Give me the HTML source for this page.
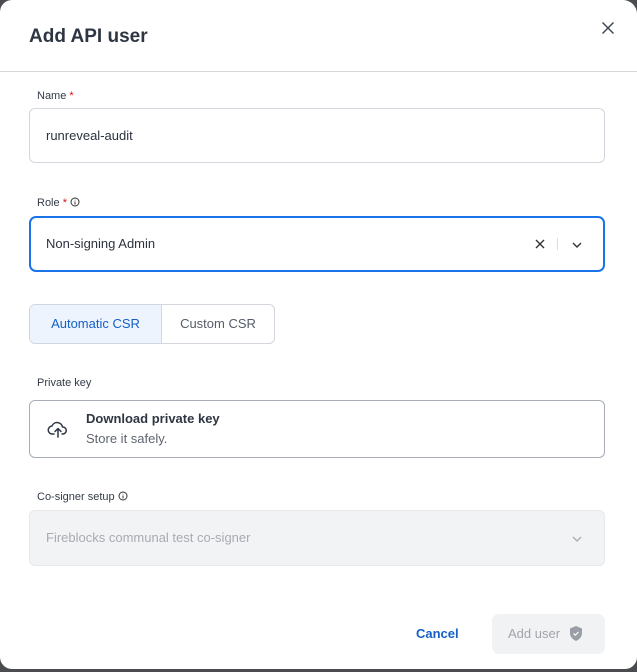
<!DOCTYPE html><html><head><style>
body{margin:0;width:637px;height:672px;background:#4a4c50;font-family:"Liberation Sans",sans-serif;position:relative;overflow:hidden}
.m{position:absolute;left:0;top:0;width:637px;height:669px;background:#fff;border-radius:12px 14px 12px 12px}
.a{position:absolute}
.lbl{font-size:11px;color:#333b48}
.st{color:#d11}
.box{position:absolute;left:29px;width:576px;border:1px solid #d3d6dc;border-radius:6px;box-sizing:border-box}
</style></head><body><div class="m">
<div class="a" style="left:29px;top:26px;font-size:19px;font-weight:bold;color:#2f3643">Add API user</div>
<svg class="a" style="left:601px;top:21px" width="14" height="14"><path d="M1.5 1.5L12.5 12.5M12.5 1.5L1.5 12.5" stroke="#3a404c" stroke-width="1.4"/></svg>
<div class="a" style="left:0;top:71px;width:637px;height:1px;background:#d6d8dc"></div>
<div class="a lbl" style="left:37px;top:90px">Name <span class="st">*</span></div>
<div class="box" style="top:108px;height:55px"><div class="a" style="left:16px;top:19px;font-size:13px;color:#2c3340">runreveal-audit</div></div>
<div class="a lbl" style="left:37px;top:197px">Role <span class="st">*</span> <svg width="10" height="10" style="vertical-align:-1px"><circle cx="5" cy="5" r="4" fill="none" stroke="#333" stroke-width="1"/><path d="M5 4.5V7.5M5 2.8V3.4" stroke="#333"/></svg></div>
<div class="box" style="top:216px;height:56px;border:2px solid #1a73e8;border-radius:7px"><div class="a" style="left:15px;top:18px;font-size:13px;color:#2c3340">Non-signing Admin</div>
<svg class="a" style="left:503px;top:20px" width="12" height="12"><path d="M2 2L10 10M10 2L2 10" stroke="#333" stroke-width="1.4"/></svg>
<div class="a" style="left:526px;top:20px;width:1px;height:12px;background:#ddd"></div>
<svg class="a" style="left:540px;top:22px" width="12" height="10"><path d="M2 3L6 7L10 3" fill="none" stroke="#333" stroke-width="1.4"/></svg></div>
<div class="a" style="left:29px;top:304px;width:246px;height:40px;border:1px solid #d3d6dc;border-radius:6px;box-sizing:border-box;overflow:hidden;font-size:13px">
<div class="a" style="left:0;top:0;width:131px;height:38px;background:#edf4fd;border-right:1px solid #d3d6dc;color:#1560c8;line-height:38px;text-align:center">Automatic CSR</div>
<div class="a" style="left:132px;top:0;width:112px;height:38px;color:#555c68;line-height:38px;text-align:center">Custom CSR</div></div>
<div class="a lbl" style="left:37px;top:377px">Private key</div>
<div class="box" style="top:400px;height:58px;border-color:#a8adb5">
<svg class="a" style="left:17px;top:18px" width="22" height="20" viewBox="0 0 22 20"><path d="M7 15H5.5A4 4 0 0 1 5 7a5.5 5.5 0 0 1 10.5 1A3.5 3.5 0 0 1 16 15h-1M11 18V10M8 12.5L11 9.5L14 12.5" fill="none" stroke="#2f3643" stroke-width="1.5" stroke-linecap="round" stroke-linejoin="round"/></svg>
<div class="a" style="left:56px;top:10px;font-size:13px;font-weight:bold;color:#2f3643">Download private key</div>
<div class="a" style="left:56px;top:30px;font-size:13px;color:#5f6570">Store it safely.</div></div>
<div class="a lbl" style="left:37px;top:491px">Co-signer setup <svg width="10" height="10" style="vertical-align:-1px"><circle cx="5" cy="5" r="4" fill="none" stroke="#333" stroke-width="1"/><path d="M5 4.5V7.5M5 2.8V3.4" stroke="#333"/></svg></div>
<div class="box" style="top:510px;height:56px;background:#f2f3f5;border-color:#e6e8eb"><div class="a" style="left:16px;top:19px;font-size:13px;color:#a7abb2">Fireblocks communal test co-signer</div>
<svg class="a" style="left:541px;top:23px" width="12" height="10"><path d="M2 3L6 7L10 3" fill="none" stroke="#aaa" stroke-width="1.3"/></svg></div>
<div class="a" style="left:416px;top:626px;font-size:13px;font-weight:bold;color:#1560c8">Cancel</div>
<div class="a" style="left:492px;top:614px;width:113px;height:40px;background:#f1f2f4;border-radius:7px">
<div class="a" style="left:16px;top:12px;font-size:13px;color:#a0a4ab">Add user</div>
<svg class="a" style="left:77px;top:11px" width="14" height="17" viewBox="0 0 14 17"><path d="M7 1L13 3.5V8c0 4-3 6.5-6 8C4 14.5 1 12 1 8V3.5Z" fill="#9a9ea6"/><path d="M4.5 8.5L6.3 10.2L9.5 7" fill="none" stroke="#f1f2f4" stroke-width="1.3"/></svg></div>
</div></body></html>
